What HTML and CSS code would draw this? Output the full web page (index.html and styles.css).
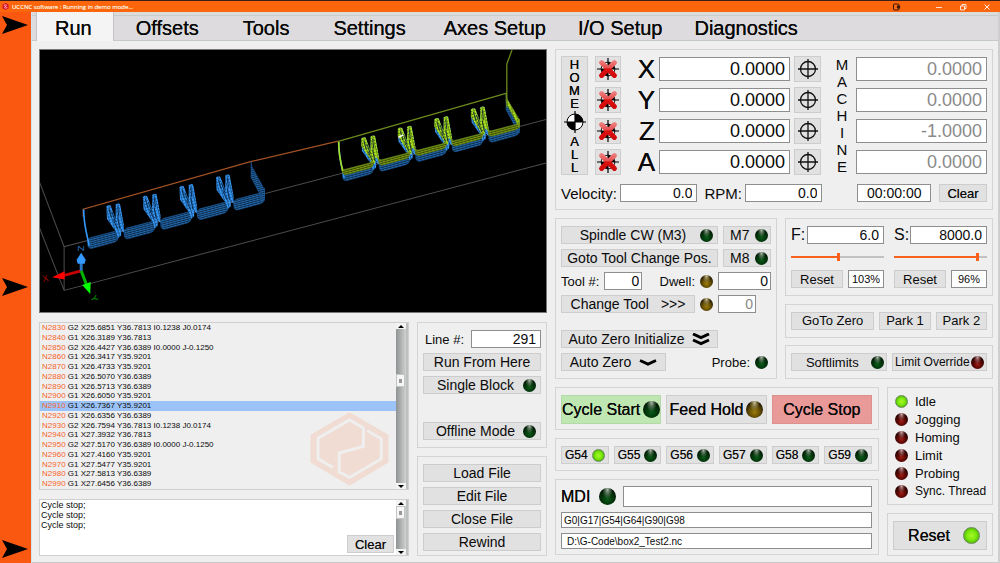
FILE: index.html
```html
<!DOCTYPE html>
<html lang="en">
<head>
<meta charset="utf-8">
<title>UCCNC software</title>
<link rel="stylesheet" href="styles.css">
</head>
<body>
<svg class="defs" width="0" height="0" aria-hidden="true">
  <defs>
    <linearGradient id="red" gradientUnits="userSpaceOnUse" x1="0" y1="2" x2="0" y2="22">
      <stop offset="0" stop-color="#f08a8a"/><stop offset=".42" stop-color="#e65050"/><stop offset=".5" stop-color="#dc1010"/><stop offset="1" stop-color="#cc0808"/>
    </linearGradient>
    <symbol id="unhomed" viewBox="0 0 24 24">
      <circle cx="12" cy="12" r="7.500" fill="#fff" stroke="#000"/>
      <path d="M12 12V4.500A7.500 7.500 0 0 1 19.500 12ZM12 12V19.500A7.500 7.500 0 0 1 4.500 12Z"/>
      <path d="M12 0V24M0 12H24" stroke="#000" stroke-width="1.300"/>
      <path d="M5 5L19 19M19 5L5 19" stroke="url(#red)" stroke-width="5.500" stroke-linecap="round"/>
    </symbol>
    <symbol id="target" viewBox="0 0 22 22">
      <circle cx="11" cy="11" r="7.500" fill="none" stroke="#111" stroke-width="1.300"/>
      <path d="M11 1V21M1 11H21" stroke="#111" stroke-width="1.300"/>
    </symbol>
    <symbol id="datum" viewBox="0 0 22 22">
      <circle cx="11" cy="11" r="8" fill="#fff" stroke="#000"/>
      <path d="M11 11V3A8 8 0 0 1 19 11ZM11 11V19A8 8 0 0 1 3 11Z"/>
      <path d="M11 0V22M0 11H22" stroke="#000" stroke-width="1.200"/>
    </symbol>
    <symbol id="arrow" viewBox="0 0 26 18"><path d="M0 0L26 9L0 18L5 9Z"/></symbol>
  </defs>
</svg>

<header class="titlebar">
  <svg class="app-icon" viewBox="0 0 8 8"><path d="M4 0L7.500 2V6L4 8L.5 6V2Z" fill="#d4122a"/><path d="M2 3L4 2L5 3L3 5L4 6L6 5" stroke="#ffd9d9" fill="none"/></svg>
  <span class="title">UCCNC software : Running in demo mode...</span>
  <svg class="tray-icon" viewBox="0 0 8 8"><rect x=".5" y="1" width="5.500" height="6" rx="1" fill="none" stroke="#3a1a08"/><circle cx="5.500" cy="4" r="1.800" fill="#3a1a08"/></svg>
  <button class="win" aria-label="Minimize"><svg viewBox="0 0 8 8"><path d="M1 4.500H7" stroke="#fff" stroke-width=".8"/></svg></button>
  <button class="win" aria-label="Restore"><svg viewBox="0 0 8 8"><path d="M1.500 3H5.500V7H1.500ZM3 3V1.500H7V5.500H5.500" stroke="#fff" stroke-width=".8" fill="none"/></svg></button>
  <button class="win" aria-label="Close"><svg viewBox="0 0 8 8"><path d="M1.500 1.500L6.500 6.500M6.500 1.500L1.500 6.500" stroke="#fff" stroke-width=".9"/></svg></button>
</header>

<div class="shell">
  <aside class="rail">
    <svg><use href="#arrow"/></svg>
    <svg><use href="#arrow"/></svg>
    <svg><use href="#arrow"/></svg>
  </aside>

  <div class="app">
    <nav class="tabs">
      <button class="tab active">Run</button>
      <button class="tab">Offsets</button>
      <button class="tab">Tools</button>
      <button class="tab">Settings</button>
      <button class="tab">Axes Setup</button>
      <button class="tab">I/O Setup</button>
      <button class="tab">Diagnostics</button>
    </nav>

    <main class="content">
      <section class="left">
        <div class="viewport">
          <svg viewBox="40 50 506 261" preserveAspectRatio="xMidYMid slice" role="img" aria-label="Toolpath view">
            <defs>
              <pattern id="hb" width="6" height="2" patternUnits="userSpaceOnUse" patternTransform="rotate(-15)"><rect width="6" height="2" fill="#0c2c4c"/><rect width="6" height="1" fill="#2468aa"/></pattern>
              <pattern id="hg" width="6" height="2" patternUnits="userSpaceOnUse" patternTransform="rotate(-15)"><rect width="6" height="2" fill="#3a4a04"/><rect width="6" height="1" fill="#7c9a14"/></pattern>
              <pattern id="wb" width="3" height="3" patternUnits="userSpaceOnUse" patternTransform="rotate(-14)"><rect width="3" height="3" fill="#1c5a98"/><rect width="2" height="3" fill="#3a9cfa"/><rect y="2" width="1" height="1" fill="#14467c"/></pattern>
              <pattern id="wg" width="3" height="3" patternUnits="userSpaceOnUse" patternTransform="rotate(-14)"><rect width="3" height="3" fill="#6a8a10"/><rect width="2" height="3" fill="#b0ec20"/><rect y="2" width="1" height="1" fill="#4a600c"/></pattern>
              <path id="tray" d="M88.500 239L91 237L116 230.500L119 226V236Q118.500 240.500 115 241.500L93 247.500Q89 248.500 88.500 244Z"/>
              <path id="trayTop" d="M88 236L91 236.500L116 230L119 225V231Q118.500 234.500 115 235.500L93 241.500Q88.500 242.500 88 239Z"/>
              <path id="fin" d="M107 206L109 204.500L111.300 205L116.300 218V204L118.300 202.700L120.700 203.300L124.700 225V232L122 229.500L121.700 235L118.700 237.300L117.300 232L107.700 218.300Z"/>
              <path id="finTop" d="M107 206L109 204.500L111.300 205L116.300 218V204L118.300 202.700L120.700 203.300L124.700 225V228L121.500 224L120.500 231L118.200 230L107 213Z"/>
              <path id="gaps" d="M112.500 211L116 221M118.300 206L119.500 216M118.300 217L120.500 228M109.500 208L112 217M114 219L118 228" fill="none" stroke="#04203c" stroke-width=".9"/>
              <path id="edges" d="M84.500 209Q84.500 222 88.500 238L90 245" fill="none" stroke-width="1.600"/>
              <path id="wall" d="M251.300 161.500L252 166L264.500 189V200L263.500 200L251.300 177Z"/>
              <path id="wallTop" d="M251.300 161.500L252 166L264.500 187V195L251.300 170Z"/>
            </defs>
            <g fill="none" stroke="#4c4c4c">
              <path d="M547 118.700L65 246V289.500L547 162M65 246L38 175M65 289.500L38 221"/>
            </g>
            <path d="M84 216V208.500L251.500 161L338 140.700" fill="none" stroke="#a45224" stroke-width="1.200"/>
            <g id="blueParts">
              <g fill="url(#hb)" stroke="#1d5c9c" stroke-width=".6">
                <use href="#tray"/><use href="#tray" x="36.400" y="-9.600"/><use href="#tray" x="72.800" y="-19.200"/><use href="#tray" x="109.200" y="-28.800"/><use href="#tray" x="145.600" y="-38.400"/>
                <use href="#wall"/>
              </g>
              <g fill="url(#wb)">
                <use href="#fin"/><use href="#fin" x="36.400" y="-9.600"/><use href="#fin" x="72.800" y="-19.200"/><use href="#fin" x="109.200" y="-28.800"/>
              </g>
              <use href="#edges" stroke="#3399ff"/>
            </g>
            <use href="#blueParts" x="254" y="-67.600"/>
            <g transform="translate(254 -67.600)">
              <g fill="url(#hg)" stroke="#6c8a10" stroke-width=".6">
                <use href="#trayTop"/><use href="#trayTop" x="36.400" y="-9.600"/><use href="#trayTop" x="72.800" y="-19.200"/><use href="#trayTop" x="109.200" y="-28.800"/><use href="#trayTop" x="145.600" y="-38.400"/>
                <use href="#wallTop" fill="url(#wg)"/>
              </g>
              <g fill="url(#wg)">
                <use href="#finTop"/><use href="#finTop" x="36.400" y="-9.600"/><use href="#finTop" x="72.800" y="-19.200"/><use href="#finTop" x="109.200" y="-28.800"/>
              </g>
              <path d="M84.500 209Q84.500 222 88.500 238" fill="none" stroke="#a8e020" stroke-width="1.600"/>
            </g>
            <g id="gapSet"><use href="#gaps"/><use href="#gaps" x="36.400" y="-9.600"/><use href="#gaps" x="72.800" y="-19.200"/><use href="#gaps" x="109.200" y="-28.800"/></g>
            <use href="#gapSet" x="254" y="-67.600"/>
            <path d="M338 141L506 93M506 107V64L511.500 49" fill="none" stroke="#6c8a1c" stroke-width="1.300"/>
            <path d="M398 137L403 134.500" stroke="#fff" stroke-width="1.500"/>
            <path d="M82 270L65 274.500" stroke="#c80000" stroke-width="3"/><path d="M53 276.500L65.500 270.500V278.500Z" fill="#f00"/>
            <path d="M82 270V262" stroke="#2a78c4" stroke-width="3"/><path d="M82 252L86.500 259L85.500 263H78.500L77.500 259Z" fill="#3399ff"/>
            <path d="M82 270L87 283" stroke="#00b400" stroke-width="3"/><path d="M83 284L91.500 281L91 293Z" fill="#0f0"/>
            <text class="axis-x" transform="translate(44 281) rotate(-12)">X</text>
            <text class="axis-z" transform="translate(79 245) rotate(90)">Z</text>
            <text class="axis-y" transform="translate(91 296) rotate(65)">Y</text>
          </svg>
        </div>

        <div class="lower">
          <div class="lists">
            <div class="code-box">
              <ol class="code">
                <li><b>N2830</b> G2 X25.6851 Y36.7813 I0.1238 J0.0174</li>
                <li><b>N2840</b> G1 X26.3189 Y36.7813</li>
                <li><b>N2850</b> G2 X26.4427 Y36.6389 I0.0000 J-0.1250</li>
                <li><b>N2860</b> G1 X26.3417 Y35.9201</li>
                <li><b>N2870</b> G1 X26.4733 Y35.9201</li>
                <li><b>N2880</b> G1 X26.5070 Y36.6389</li>
                <li><b>N2890</b> G1 X26.5713 Y36.6389</li>
                <li><b>N2900</b> G1 X26.6050 Y35.9201</li>
                <li class="current"><b>N2910</b> G1 X26.7367 Y35.9201</li>
                <li><b>N2920</b> G1 X26.6356 Y36.6389</li>
                <li><b>N2930</b> G2 X26.7594 Y36.7813 I0.1238 J0.0174</li>
                <li><b>N2940</b> G1 X27.3932 Y36.7813</li>
                <li><b>N2950</b> G2 X27.5170 Y36.6389 I0.0000 J-0.1250</li>
                <li><b>N2960</b> G1 X27.4160 Y35.9201</li>
                <li><b>N2970</b> G1 X27.5477 Y35.9201</li>
                <li><b>N2980</b> G1 X27.5813 Y36.6389</li>
                <li><b>N2990</b> G1 X27.6456 Y36.6389</li>
              </ol>
              <svg class="watermark" viewBox="119 306 238 224" aria-hidden="true">
                <path d="M238 307L356 375V459L238 529L120 459V375Z" fill="#f0dcd2"/>
                <path d="M188 474L143 448V385L238 330L280 354V410L207 430V492M291 362L334 387V448L238 504L211 489" fill="none" stroke="#efefef" stroke-width="9"/>
              </svg>
              <div class="scroll"><i class="up"></i><span class="track"><i class="thumb code-thumb"></i></span><i class="down"></i></div>
            </div>
            <div class="log-box">
              <div class="log"><div>Cycle stop;</div><div>Cycle stop;</div><div>Cycle stop;</div></div>
              <button class="btn clear">Clear</button>
              <div class="scroll"><i class="up"></i><span class="track"><i class="thumb"></i></span><i class="down"></i></div>
            </div>
          </div>
          <div class="side">
            <div class="panel stack">
              <div class="row"><label for="line">Line #:</label><input id="line" class="line-in" value="291"></div>
              <button class="btn">Run From Here</button>
              <button class="btn lit"><span>Single Block</span><i class="led green"></i></button>
              <button class="btn lit offline"><span>Offline Mode</span><i class="led green"></i></button>
            </div>
            <div class="panel stack files">
              <button class="btn">Load File</button>
              <button class="btn">Edit File</button>
              <button class="btn">Close File</button>
              <button class="btn">Rewind</button>
            </div>
          </div>
        </div>
      </section>

      <section class="right">
        <div class="panel position">
          <div class="dro">
            <button class="btn home-all" aria-label="Home all"><span>H</span><span>O</span><span>M</span><span>E</span><svg><use href="#datum"/></svg><span>A</span><span>L</span><span>L</span></button>
            <button class="btn icon" aria-label="Home X"><svg><use href="#unhomed"/></svg></button><label class="axis" for="x">X</label><input id="x" value="0.0000"><button class="btn icon" aria-label="Zero X"><svg><use href="#target"/></svg></button>
            <div class="machine"><span>M</span><span>A</span><span>C</span><span>H</span><span>I</span><span>N</span><span>E</span></div>
            <input class="dim" aria-label="Machine X" value="0.0000" readonly>
            <button class="btn icon" aria-label="Home Y"><svg><use href="#unhomed"/></svg></button><label class="axis" for="y">Y</label><input id="y" value="0.0000"><button class="btn icon" aria-label="Zero Y"><svg><use href="#target"/></svg></button>
            <input class="dim" aria-label="Machine Y" value="0.0000" readonly>
            <button class="btn icon" aria-label="Home Z"><svg><use href="#unhomed"/></svg></button><label class="axis" for="z">Z</label><input id="z" value="0.0000"><button class="btn icon" aria-label="Zero Z"><svg><use href="#target"/></svg></button>
            <input class="dim" aria-label="Machine Z" value="-1.0000" readonly>
            <button class="btn icon" aria-label="Home A"><svg><use href="#unhomed"/></svg></button><label class="axis" for="a">A</label><input id="a" value="0.0000"><button class="btn icon" aria-label="Zero A"><svg><use href="#target"/></svg></button>
            <input class="dim" aria-label="Machine A" value="0.0000" readonly>
          </div>
          <div class="status">
            <label for="vel">Velocity:</label><input id="vel" value="0.0">
            <label class="rpm" for="rpm">RPM:</label><input id="rpm" value="0.0">
            <input class="time" aria-label="Run time" value="00:00:00">
            <button class="btn clear">Clear</button>
          </div>
        </div>

        <div class="middle">
          <div class="panel tools">
            <div class="row"><button class="btn lit grow"><span>Spindle CW (M3)</span><i class="led green"></i></button><button class="btn m"><span>M7</span><i class="led green"></i></button></div>
            <div class="row"><button class="btn grow">Goto Tool Change Pos.</button><button class="btn m"><span>M8</span><i class="led green"></i></button></div>
            <div class="row"><label for="tool">Tool #:</label><input id="tool" class="tool-in" value="0"><label class="push" for="dwell">Dwell:</label><i class="led amber"></i><input id="dwell" class="dwell-in" value="0"></div>
            <div class="row"><button class="btn change"><span>Change Tool</span><span>&gt;&gt;&gt;</span></button><i class="led amber"></i><span class="dwell-in"><input class="dim next-in" aria-label="Next tool" value="0" readonly></span></div>
            <div class="row apart"><button class="btn init"><span>Auto Zero Initialize</span><svg viewBox="0 0 18 13"><path d="M1 1L9 4.500L17 1M1 7L9 10.500L17 7" fill="none" stroke="#000" stroke-width="3"/></svg></button></div>
            <div class="row"><button class="btn auto"><span>Auto Zero</span><svg viewBox="0 0 18 13"><path d="M1 4.500L9 8L17 4.500" fill="none" stroke="#000" stroke-width="3"/></svg></button><span class="push">Probe:</span><i class="led green probe"></i></div>
          </div>
          <div class="feeds">
            <div class="panel overrides">
              <div class="override">
                <div class="row"><label for="f">F:</label><input id="f" value="6.0"></div>
                <input type="range" class="slide feed" aria-label="Feed override" min="0" max="200" value="102">
                <div class="row"><button class="btn">Reset</button><input class="pct" aria-label="Feed percent" value="103%"></div>
              </div>
              <div class="override">
                <div class="row"><label for="s">S:</label><input id="s" value="8000.0"></div>
                <input type="range" class="slide speed" aria-label="Spindle override" min="0" max="100" value="91">
                <div class="row"><button class="btn">Reset</button><input class="pct" aria-label="Spindle percent" value="96%"></div>
              </div>
            </div>
            <div class="panel row goto"><button class="btn">GoTo Zero</button><button class="btn">Park 1</button><button class="btn">Park 2</button></div>
            <div class="panel row limits"><button class="btn lit"><span>Softlimits</span><i class="led green"></i></button><button class="btn override-btn"><span>Limit Override</span><i class="led red"></i></button></div>
          </div>
        </div>

        <div class="bottom">
          <div class="column">
            <div class="panel row cycle">
              <button class="btn start"><span>Cycle Start</span><i class="led big green"></i></button>
              <button class="btn"><span>Feed Hold</span><i class="led big amber"></i></button>
              <button class="btn stop">Cycle Stop</button>
            </div>
            <div class="panel row fixtures">
              <button class="btn"><span>G54</span><i class="led on"></i></button>
              <button class="btn"><span>G55</span><i class="led green"></i></button>
              <button class="btn"><span>G56</span><i class="led green"></i></button>
              <button class="btn"><span>G57</span><i class="led green"></i></button>
              <button class="btn"><span>G58</span><i class="led green"></i></button>
              <button class="btn"><span>G59</span><i class="led green"></i></button>
            </div>
            <div class="panel mdi">
              <div class="row"><label for="mdi">MDI</label><i class="led big green"></i><input id="mdi" value=""></div>
              <input class="info" aria-label="Active modes" value="G0|G17|G54|G64|G90|G98" readonly>
              <input class="info path" aria-label="Loaded file" value="D:\G-Code\box2_Test2.nc" readonly>
            </div>
          </div>
          <div class="column">
            <ul class="panel states">
              <li><i class="led on"></i>Idle</li>
              <li><i class="led red"></i>Jogging</li>
              <li><i class="led red"></i>Homing</li>
              <li><i class="led red"></i>Limit</li>
              <li><i class="led red"></i>Probing</li>
              <li class="long"><i class="led red"></i>Sync. Thread</li>
            </ul>
            <div class="panel row reset"><button class="btn"><span>Reset</span><i class="led big on"></i></button></div>
          </div>
        </div>
      </section>
    </main>
  </div>
</div>
</body>
</html>
```
FILE: styles.css
```css
* { box-sizing: border-box; }
body {
  margin: 0;
  min-height: 100vh;
  display: flex;
  flex-direction: column;
  background: #efefef;
  color: #0a0a0a;
  font-family: "Liberation Sans", Arial, sans-serif;
  font-size: 13px;
}
button, input { font: inherit; color: inherit; border-radius: 0; margin: 0; }
.defs { position: absolute; }

.titlebar {
  display: flex;
  align-items: center;
  height: 12px;
  padding: 0 8px 0 2px;
  background: #fb650c;
  border-top: 1px solid #3a2018;
  color: #ffe8d8;
}
.app-icon { width: 7px; height: 7px; }
.title { margin-left: 3px; flex: 1; font: 6px/10px "Open Sans", sans-serif; text-shadow: 0 0 0 #ffe8d8; }
.tray-icon { width: 8px; height: 8px; margin-right: 33px; }
.win { width: 10px; height: 10px; margin-left: 14px; padding: 0; border: 0; background: none; display: flex; }
.win:first-of-type { margin-left: 0; }
.win svg { width: 8px; height: 8px; margin: auto; }

.shell { flex: 1; display: flex; }
.rail {
  width: 32px;
  display: flex;
  flex-direction: column;
  justify-content: space-between;
  padding: 4px 0 6px 2px;
  background: #fa5810;
  border-right: 1px solid #cfe4ee;
}
.rail svg { width: 26px; height: 18px; }
.app {
  flex: 1;
  min-width: 0;
  display: flex;
  flex-direction: column;
  border-right: 2px solid #cfcfcf;
  border-bottom: 2px solid #c9c9c9;
}

.tabs {
  display: flex;
  height: 29px;
  padding-left: 4px;
  background: linear-gradient(#dcdcdc 0 3px, #c6cbcb 3px 4px, #dddbdd 4px);
  border-bottom: 1px solid #c4c9c9;
}
.tab {
  border: 0;
  background: none;
  padding: 3px 22px 0;
  font-size: 20px;
  line-height: 24px;
  text-align: center;
  text-shadow: 0 0 0 #000;
  white-space: nowrap;
}
.tab:nth-child(n+5) { padding: 3px 16px 0; }
.tab.active {
  padding: 3px 21px 0 18px;
  height: 29px;
  background: #f4f4f4;
  border-left: 1px solid #c4c4c4;
  border-right: 1px solid #c4c4c4;
}

.content {
  flex: 1;
  display: grid;
  grid-template-columns: minmax(0, 508fr) minmax(0, 438fr);
  gap: 8px;
  padding: 8px 5px 6px 7px;
}
.left { display: flex; flex-direction: column; gap: 9px; }
.viewport { flex: 1; min-height: 200px; position: relative; background: #000; border: 1px solid #777; }
.viewport svg { position: absolute; width: 100%; height: 100%; }
.axis-x, .axis-y, .axis-z { font-size: 9px; }
.axis-x { fill: #b00000; }
.axis-y { fill: #00a000; }
.axis-z { fill: #2a78c4; }

.lower { display: grid; grid-template-columns: minmax(0, 370fr) minmax(0, 130fr); gap: 8px; }
.lists { display: flex; flex-direction: column; gap: 9px; }
.code-box { position: relative; flex: 1; display: flex; border: 1px solid #cfcfcf; }
.code { flex: 1; margin: 0; padding: 0; list-style: none; display: grid; grid-auto-rows: 1fr; font-size: 8px; line-height: 9px; }
.code li { padding-left: 2px; white-space: nowrap; }
.code b { font-weight: normal; color: #f8642a; }
.code .current { background: #9bc3f8; }
.watermark { position: absolute; right: 19px; bottom: 3px; width: 79px; height: 74px; }
.log-box { display: flex; height: 57px; background: #fff; border: 1px solid #cfcfcf; }
.log { flex: 1; padding: 0 1px; font-size: 9px; line-height: 10px; }
.log-box .clear { align-self: flex-end; width: 47px; margin: 0 2px 2px 0; }
.scroll { width: 12px; display: flex; flex-direction: column; background: #f4f4f4; border-right: 2px solid #bcc0c0; }
.scroll .up, .scroll .down { height: 6px; display: flex; align-items: center; justify-content: center; }
.scroll .up::before { content: ""; border: 3px solid transparent; border-top: 0; border-bottom-color: #000; }
.scroll .down::before { content: ""; border: 3px solid transparent; border-bottom: 0; border-top-color: #000; }
.track { flex: 1; background: linear-gradient(90deg, #8f9393, #d0d0d0); }
.thumb {
  display: block;
  width: 9px;
  height: 13px;
  background: linear-gradient(#999, #999) center / 3px 4px no-repeat #f6f6f6;
  border: 1px solid #c4c4c4;
}
.code-thumb { margin-top: 45px; }

.panel { border: 1px solid #d4d4d4; padding: 8px 5px; }
.row { display: flex; align-items: center; gap: 5px; }
.side { display: flex; flex-direction: column; gap: 8px; }
.stack { display: flex; flex-direction: column; gap: 5px; padding: 7px 5px; font-size: 14px; }
.stack label { font-size: 13px; flex: 1; padding-left: 2px; }
.stack .line-in { width: 70px; padding-right: 4px; }
.offline { margin-top: 23px; }
.files { padding: 7px 5px 4px; }

.btn {
  display: flex;
  align-items: center;
  justify-content: center;
  height: 18px;
  padding: 0 4px;
  background: #e1e1e1;
  border: 1px solid #cdcdcd;
  white-space: nowrap;
}
.lit { padding: 0 4px; }
.lit span { flex: 1; text-align: center; }
.grow { flex: 1; }
.push { margin-left: auto; }
.clear { font-size: 13px; text-shadow: 0 0 0 #555; }
input {
  min-width: 0;
  height: 18px;
  padding: 0 4px;
  background: #fff;
  border: 1px solid #8e8e8e;
  text-align: right;
}
input.dim { color: #8a8a8a; }

.led { flex: none; width: 13px; height: 13px; border-radius: 50%; }
.led.big { width: 17px; height: 17px; }
.green { background: radial-gradient(ellipse at 50% 10%, #a8b8a8 0, #5c745c 16%, transparent 42%), radial-gradient(circle at 50% 65%, #0a5a18 0, #033a0c 35%, #011404 75%); }
.amber { background: radial-gradient(ellipse at 50% 10%, #c8c0a0 0, #8a7c48 16%, transparent 42%), radial-gradient(circle at 50% 65%, #9c7c08 0, #6a5204 35%, #1c1400 75%); }
.red { background: radial-gradient(ellipse at 50% 10%, #c8a8a8 0, #8a5454 16%, transparent 42%), radial-gradient(circle at 50% 65%, #a01c14 0, #5c0804 35%, #1c0000 75%); }
.on { background: radial-gradient(circle at 50% 50%, #a4f828 0, #7ce80c 45%, #50b808 75%); border: 1px solid #6a8a5c; }

.right { display: flex; flex-direction: column; gap: 8px; }
.position { padding: 6px 5px 7px; }
.dro {
  display: grid;
  grid-template-columns: 30px 26px 30px minmax(0, 1fr) 27px 27px minmax(0, 1fr);
  grid-auto-rows: 26px;
  gap: 5px 4px;
  align-items: center;
}
.dro input { height: 24px; font-size: 18px; }
.home-all {
  grid-row: span 4;
  height: 100%;
  width: 27px;
  flex-direction: column;
  font-size: 13px;
  line-height: 13px;
  text-shadow: 0 0 0 #000;
}
.home-all svg { width: 22px; height: 22px; margin: 1px 0 2px; }
.icon { height: 26px; padding: 0; }
.icon svg { width: 22px; height: 22px; }
.axis { font-size: 26px; line-height: 26px; text-align: right; text-shadow: 0 0 0 #000; }
.machine { grid-row: span 4; display: flex; flex-direction: column; align-items: center; justify-content: space-between; padding-left: 7px; font-size: 15px; line-height: 17px; }
.status { display: flex; align-items: center; gap: 3px; margin-top: 9px; font-size: 15px; }
.status input { flex: 1; font-size: 14px; }
.status .rpm { margin-left: 4px; }
.status .time { margin-left: 32px; text-align: center; padding: 0 2px; }
.status .btn { width: 48px; margin-left: 5px; }

.middle { display: grid; grid-template-columns: minmax(0, 222fr) minmax(0, 208fr); gap: 8px; }
.tools { display: flex; flex-direction: column; gap: 5px; padding: 7px 5px; }
.tools .btn { font-size: 14px; }
.tools label { white-space: nowrap; }
.m { width: 48px; padding: 0 2px 0 6px; justify-content: space-between; }
.tool-in { width: 38px; padding: 0 2px; }
.tools input { font-size: 14px; padding: 0 2px; }
.tools .dwell-in { width: 53px; }
.tools .next-in { display: block; width: 38px; }
.tools .change { flex: 1; gap: 12px; }
.apart { margin-top: 12px; }
.init { width: 157px; gap: 8px; }
.auto { width: 105px; gap: 8px; }
.init svg, .auto svg { width: 18px; height: 13px; }
.probe { margin-right: 3px; }

.feeds { display: flex; flex-direction: column; justify-content: space-between; }
.feeds .panel { padding: 7px 5px; }
.feeds .overrides { display: flex; gap: 10px; }
.override { flex: 1; min-width: 0; display: flex; flex-direction: column; gap: 9px; }
.override .row { gap: 1px; font-size: 14px; }
.override .row label { font-size: 16px; width: 15px; }
.override .row input { flex: 1; }
.override .row .btn { width: 52px; font-size: 13px; }
.override .row .pct { margin-left: 4px; font-size: 11px; padding: 0 3px; text-align: center; }
.slide { appearance: none; width: 100%; height: 8px; padding: 0; border: 0; }
.slide.feed { background: linear-gradient(90deg, #f8601c 51%, #c2c2c2 51%) center / 100% 2px no-repeat; }
.slide.speed { background: linear-gradient(90deg, #f8601c 91%, #c2c2c2 91%) center / 100% 2px no-repeat; }
.slide::-webkit-slider-thumb { appearance: none; width: 3px; height: 8px; background: #f8601c; }
.goto .btn { flex: 51; padding: 0; }
.goto .btn:first-child { flex: 84; }
.limits .btn { flex: 1 1 50%; min-width: 0; padding: 0 2px; }
.limits .override-btn { font-size: 12px; padding: 0; gap: 1px; }

.bottom { display: grid; grid-template-columns: minmax(0, 324fr) minmax(0, 106fr); gap: 8px; }
.column { display: flex; flex-direction: column; gap: 8px; }
.cycle { padding: 7px 6px 5px 5px; }
.cycle .btn, .reset .btn {
  flex: 1;
  height: 29px;
  padding: 0;
  gap: 3px;
  font-size: 16px;
  text-shadow: 0 0 0 #000;
}
.cycle .start { background: #bfe7b2; border-color: #b4d8a8; }
.cycle .stop { background: #ea9999; border-color: #dc9090; }
.fixtures { padding: 7px 6px 6px 5px; }
.fixtures .btn { flex: 1; padding: 0; gap: 4px; font-size: 12px; text-shadow: 0 0 0 #555; }
.mdi { display: flex; flex-direction: column; gap: 5px; padding: 6px 6px 5px 5px; }
.mdi label { width: 33px; font-size: 16px; text-shadow: 0 0 0 #000; }
.mdi .row input { flex: 1; height: 21px; margin-left: 2px; }
.mdi .info { height: 16px; font-size: 10px; text-align: left; padding: 0 2px; }
.mdi .path { padding-left: 5px; }
.states { flex: 1; margin: 0; padding: 4px 7px; list-style: none; }
.states li { display: flex; align-items: center; gap: 7px; height: 18px; white-space: nowrap; }
.states .long { font-size: 12px; }
.reset { padding: 7px 5px 5px; }
.reset .btn { gap: 13px; padding-left: 8px; }
```
